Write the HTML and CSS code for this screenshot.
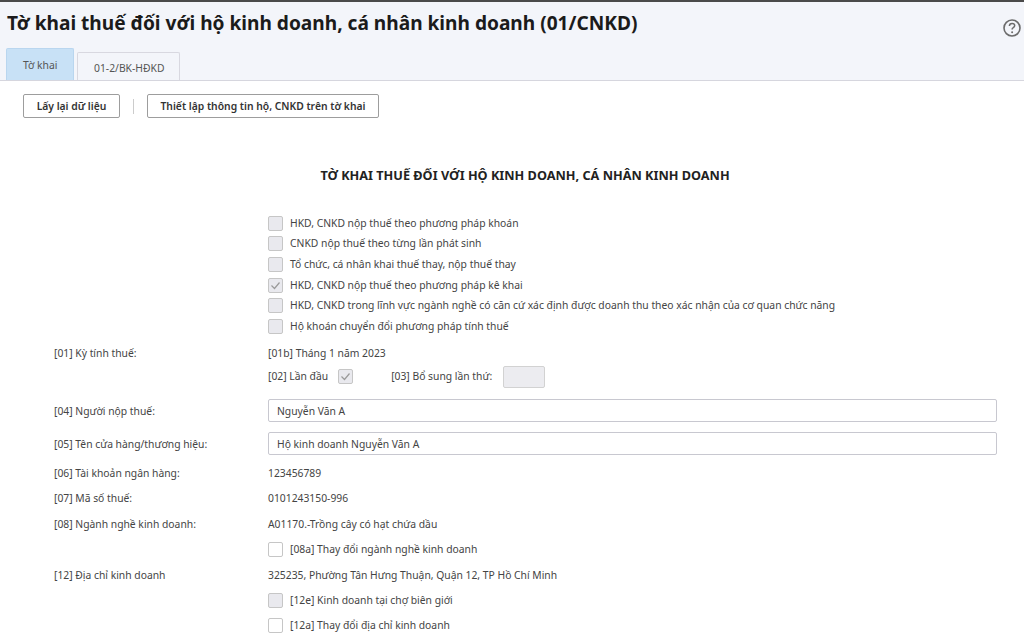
FILE: index.html
```html
<!DOCTYPE html>
<html lang="vi">
<head>
<meta charset="utf-8">
<title>Tờ khai thuế</title>
<link rel="stylesheet" href="styles.css">
</head>
<body>
<header class="top">
  <div class="title-row">
    <h1>Tờ khai thuế đối với hộ kinh doanh, cá nhân kinh doanh (01/CNKD)</h1>
    <svg class="help" width="20" height="20" viewBox="0 0 20 20"><circle cx="10" cy="10" r="8" fill="none" stroke="#6b6b6b" stroke-width="1.6"/><path d="M7.4 8c0-1.6 1.1-2.6 2.7-2.6 1.5 0 2.6.9 2.6 2.2 0 1-.5 1.5-1.4 2.1-.8.5-1.2 1-1.2 1.9" fill="none" stroke="#6b6b6b" stroke-width="1.5"/><circle cx="10.1" cy="14.3" r="1" fill="#6b6b6b"/></svg>
  </div>
  <nav class="tabs">
    <div class="tab active">Tờ khai</div>
    <div class="tab">01-2/BK-HĐKD</div>
  </nav>
</header>
<main class="content">
  <div class="toolbar">
    <button class="btn btn-a">Lấy lại dữ liệu</button>
    <span class="sep"></span>
    <button class="btn btn-b">Thiết lập thông tin hộ, CNKD trên tờ khai</button>
  </div>
  <h2 class="form-title">TỜ KHAI THUẾ ĐỐI VỚI HỘ KINH DOANH, CÁ NHÂN KINH DOANH</h2>
  <div class="opts">
    <label class="opt"><span class="cb dis"></span>HKD, CNKD nộp thuế theo phương pháp khoán</label>
    <label class="opt"><span class="cb dis"></span>CNKD nộp thuế theo từng lần phát sinh</label>
    <label class="opt"><span class="cb dis"></span>Tổ chức, cá nhân khai thuế thay, nộp thuế thay</label>
    <label class="opt"><span class="cb dis"><svg width="13" height="13" viewBox="0 0 13 13"><path d="M2.5 6.5l3 3 5-6" fill="none" stroke="#9a9a9a" stroke-width="1.2"/></svg></span>HKD, CNKD nộp thuế theo phương pháp kê khai</label>
    <label class="opt"><span class="cb dis"></span>HKD, CNKD trong lĩnh vực ngành nghề có căn cứ xác định được doanh thu theo xác nhận của cơ quan chức năng</label>
    <label class="opt"><span class="cb dis"></span>Hộ khoán chuyển đổi phương pháp tính thuế</label>
  </div>
  <div class="grid">
    <div class="lbl r01">[01] Kỳ tính thuế:</div>
    <div class="val r01">
      <div>[01b] Tháng 1 năm 2023</div>
      <div class="inline">
        <span>[02] Lần đầu</span>
        <span class="cb dis small"><svg width="13" height="13" viewBox="0 0 13 13"><path d="M2.5 6.5l3 3 5-6" fill="none" stroke="#9a9a9a" stroke-width="1.2"/></svg></span>
        <span class="l03">[03] Bổ sung lần thứ:</span>
        <span class="box"></span>
      </div>
    </div>
    <div class="lbl r04">[04] Người nộp thuế:</div>
    <div class="val r04"><div class="input">Nguyễn Văn A</div></div>
    <div class="lbl r05">[05] Tên cửa hàng/thương hiệu:</div>
    <div class="val r05"><div class="input">Hộ kinh doanh Nguyễn Văn A</div></div>
    <div class="lbl r06">[06] Tài khoản ngân hàng:</div>
    <div class="val r06">123456789</div>
    <div class="lbl r07">[07] Mã số thuế:</div>
    <div class="val r07">0101243150-996</div>
    <div class="lbl r08">[08] Ngành nghề kinh doanh:</div>
    <div class="val r08">
      <div>A01170.-Trồng cây có hạt chứa dầu</div>
      <label class="opt wide"><span class="cb"></span>[08a] Thay đổi ngành nghề kinh doanh</label>
    </div>
    <div class="lbl r12">[12] Địa chỉ kinh doanh</div>
    <div class="val r12">
      <div>325235, Phường Tân Hưng Thuận, Quận 12, TP Hồ Chí Minh</div>
      <label class="opt wide"><span class="cb dis"></span>[12e] Kinh doanh tại chợ biên giới</label>
      <label class="opt wide next"><span class="cb"></span>[12a] Thay đổi địa chỉ kinh doanh</label>
    </div>
  </div>
</main>
</body>
</html>
```
FILE: styles.css
```css
* { box-sizing: border-box; }
html, body { margin: 0; height: 643px; overflow: hidden; }
body { font-family: "Noto Sans", sans-serif; font-size: 10.33px; line-height: 15px; color: #444; background: #fff; }
.top { height: 81px; background: #f3f5fa; border-top: 2px solid #4a4a4a; border-bottom: 1px solid #d6d6de; display: flex; flex-direction: column; }
.title-row { display: flex; justify-content: space-between; align-items: flex-start; height: 46px; padding: 6px 2px 0 7px; }
h1 { margin: 0; font-size: 19.12px; line-height: 30px; font-weight: 700; color: #1b1b1b; }
.help { margin: 10px 0 0; }
.tabs { display: flex; align-items: flex-end; gap: 3px; padding-left: 6px; height: 32px; }
.tab { height: 28px; padding: 8px 16px 0; border: 1px solid #d8d8e0; border-bottom: 0; border-radius: 2px 2px 0 0; color: #555; width: 103px; white-space: nowrap; }
.tab.active { height: 32px; width: 68px; background: #c8e1f6; border-color: #b9d6ef; padding-top: 9px; }
.content { padding: 13px 27px 0 23px; }
.toolbar { display: flex; align-items: center; height: 24px; }
.btn { height: 24px; background: #fff; border: 1px solid #9d9d9d; border-radius: 2px; font: 600 10.33px "Noto Sans", sans-serif; color: #333; padding: 0; }
.btn-a { width: 97px; }
.btn-b { width: 232px; }
.sep { width: 1px; height: 15px; background: #ccc; margin: 0 13px; }
.form-title { margin: 49px 0 0; font-size: 12.7px; line-height: 16px; font-weight: 700; text-align: center; color: #222; padding-left: 30px; }
.opts { margin: 30px 0 0 245px; display: flex; flex-direction: column; }
.opt { display: flex; align-items: center; height: 20.6px; white-space: nowrap; }
.cb { flex: none; width: 15px; height: 15px; border: 1px solid #c6c6c6; border-radius: 2px; background: #fff; margin-right: 7px; display: inline-flex; align-items: center; justify-content: center; }
.cb.dis { background: #e9e9ee; }
.cb.small { margin: 0 0 0 10px; }
.grid { display: grid; grid-template-columns: 214px 1fr; margin: 9px 0 0 31px; }
.inline { display: flex; align-items: center; height: 22px; margin-top: 5px; }
.l03 { margin-left: 38px; }
.box { width: 42px; height: 22px; margin-left: 11px; border: 1px solid #d2d2d2; border-radius: 2px; background: #ececf0; }
.input { height: 23px; border: 1px solid #c8c8d0; border-radius: 2px; padding: 4px 8px; background: #fff; color: #444; }
.r01 { height: 53px; }
.r04 { height: 33px; }
.r05 { height: 33.5px; }
.lbl.r04, .lbl.r05 { padding-top: 5px; }
.r06 { height: 25px; padding-top: 1px; }
.r07 { height: 25.5px; padding-top: 1px; }
.r08 { height: 52px; padding-top: 1px; }
.wide { margin-top: 7.2px; }
.wide.next { margin-top: 4.4px; }
```
